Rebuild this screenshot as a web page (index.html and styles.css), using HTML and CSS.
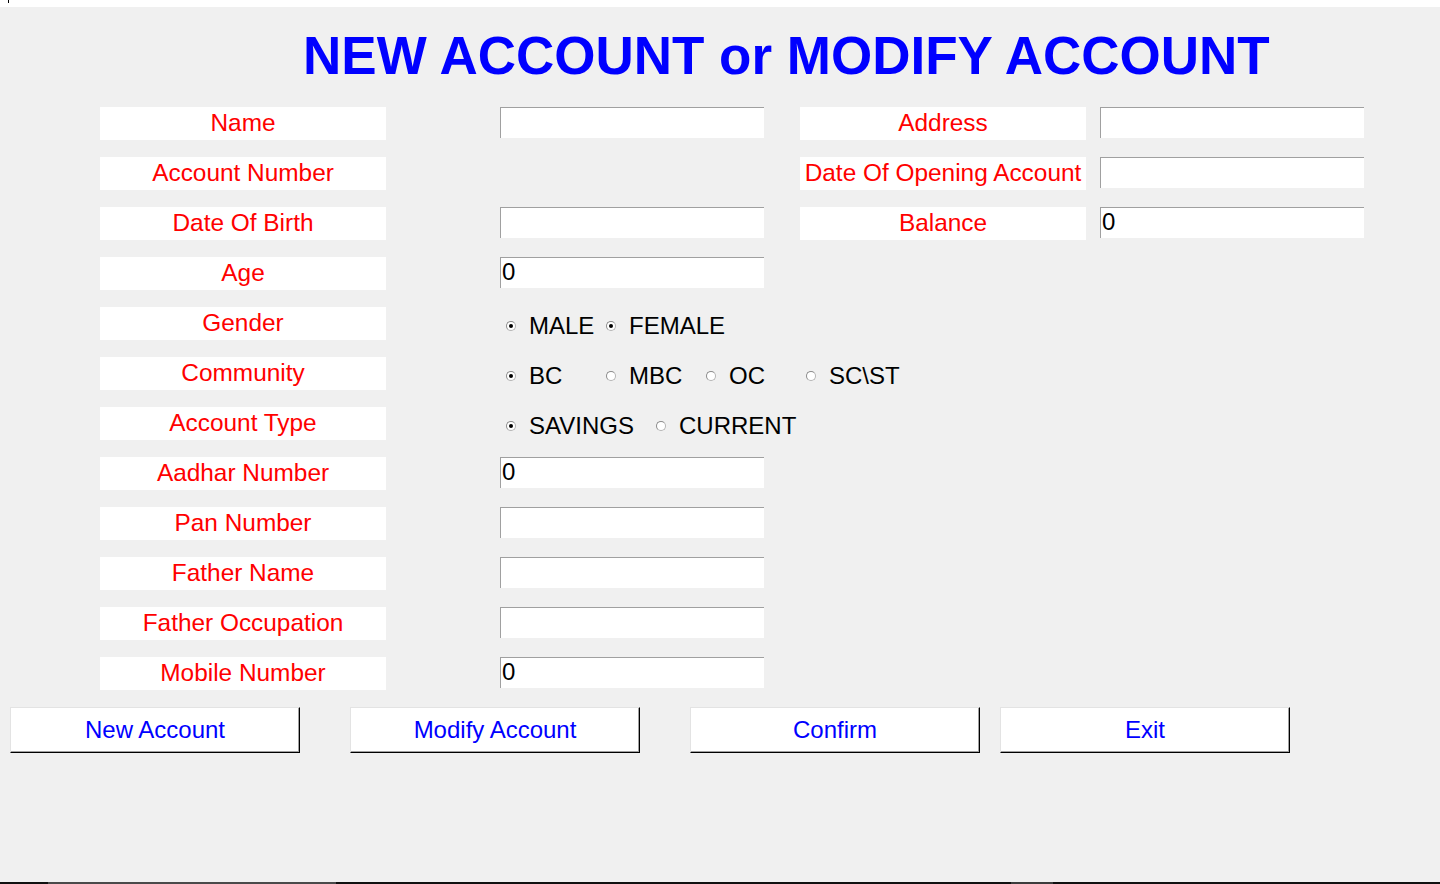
FILE: index.html
```html
<!DOCTYPE html>
<html>
<head>
<meta charset="utf-8">
<title>NEW ACCOUNT or MODIFY ACCOUNT</title>
<link rel="stylesheet" href="styles.css">
</head>
<body>
<div class="page">
  <div class="topbar"><span class="tick"></span></div>
  <h1 class="title">NEW ACCOUNT or MODIFY ACCOUNT</h1>
  <div class="form">
    <div class="row">
      <div class="label">Name</div>
      <input class="field" type="text" value="">
      <div class="label label-right">Address</div>
      <input class="field field-right" type="text" value="">
    </div>
    <div class="row">
      <div class="label">Account Number</div>
      <div class="blank"></div>
      <div class="label label-right">Date Of Opening Account</div>
      <input class="field field-right" type="text" value="">
    </div>
    <div class="row">
      <div class="label">Date Of Birth</div>
      <input class="field" type="text" value="">
      <div class="label label-right">Balance</div>
      <input class="field field-right" type="text" value="0">
    </div>
    <div class="row">
      <div class="label">Age</div>
      <input class="field" type="text" value="0">
    </div>
    <div class="row">
      <div class="label">Gender</div>
      <div class="options">
        <div class="opt w100"><span class="radio checked"></span>MALE</div>
        <div class="opt w100"><span class="radio checked"></span>FEMALE</div>
      </div>
    </div>
    <div class="row">
      <div class="label">Community</div>
      <div class="options">
        <div class="opt w100"><span class="radio checked"></span>BC</div>
        <div class="opt w100"><span class="radio"></span>MBC</div>
        <div class="opt w100"><span class="radio"></span>OC</div>
        <div class="opt w100"><span class="radio"></span>SC\ST</div>
      </div>
    </div>
    <div class="row">
      <div class="label">Account Type</div>
      <div class="options">
        <div class="opt w150"><span class="radio checked"></span>SAVINGS</div>
        <div class="opt w150"><span class="radio"></span>CURRENT</div>
      </div>
    </div>
    <div class="row">
      <div class="label">Aadhar Number</div>
      <input class="field" type="text" value="0">
    </div>
    <div class="row">
      <div class="label">Pan Number</div>
      <input class="field" type="text" value="">
    </div>
    <div class="row">
      <div class="label">Father Name</div>
      <input class="field" type="text" value="">
    </div>
    <div class="row">
      <div class="label">Father Occupation</div>
      <input class="field" type="text" value="">
    </div>
    <div class="row">
      <div class="label">Mobile Number</div>
      <input class="field" type="text" value="0">
    </div>
    <div class="buttons">
      <button class="btn gap50">New Account</button>
      <button class="btn gap50">Modify Account</button>
      <button class="btn gap20">Confirm</button>
      <button class="btn">Exit</button>
    </div>
  </div>
  <div class="spacer"></div>
  <div class="bottombar"></div>
</div>
</body>
</html>
```

FILE: styles.css
```css
* {
  box-sizing: border-box;
}

html, body {
  margin: 0;
  padding: 0;
  background: #f0f0f0;
}

body {
  font-family: "Liberation Sans", Arial, sans-serif;
}

.page {
  height: 884px;
  display: flex;
  flex-direction: column;
  overflow: hidden;
}

.topbar {
  height: 7px;
  background: #ffffff;
  flex: none;
}

.tick {
  display: block;
  margin-left: 8px;
  width: 1px;
  height: 3px;
  background: #000000;
}

.title {
  margin: 22px 0 0 0;
  padding-left: 303px;
  font-size: 53px;
  line-height: 53px;
  font-weight: bold;
  color: #0000ff;
  white-space: nowrap;
}

.form {
  margin-top: 25px;
  display: flex;
  flex-direction: column;
  gap: 17px;
}

.row {
  display: flex;
  height: 33px;
  padding-left: 100px;
}

.label {
  width: 286px;
  height: 33px;
  background: #ffffff;
  color: #ff0000;
  font-size: 24.4px;
  line-height: 31px;
  text-align: center;
  white-space: nowrap;
  flex: none;
}

.label-right {
  margin-left: 36px;
}

.field,
.blank {
  width: 264px;
  height: 31px;
  margin-left: 114px;
  flex: none;
}

.field {
  border: none;
  border-top: 1px solid #a0a0a0;
  border-left: 1px solid #a0a0a0;
  background: #ffffff;
  font-family: "Liberation Sans", Arial, sans-serif;
  font-size: 24px;
  color: #000000;
  padding: 0 0 2px 1px;
  outline: none;
}

.field-right {
  margin-left: 14px;
}

.options {
  display: flex;
  margin-left: 114px;
}

.opt {
  display: flex;
  align-items: flex-start;
  height: 33px;
  padding-top: 1px;
  font-size: 24px;
  line-height: 35px;
  color: #000000;
  white-space: nowrap;
}

.w100 {
  width: 100px;
}

.w150 {
  width: 150px;
}

.radio {
  width: 10px;
  height: 10px;
  margin: 13px 13px 0 6px;
  border-radius: 50%;
  background: #ffffff;
  border: 1px solid #b4b4b4;
  border-top-color: #8a8a8a;
  border-left-color: #8a8a8a;
  display: flex;
  align-items: center;
  justify-content: center;
  flex: none;
}

.radio.checked::after {
  content: "";
  width: 4px;
  height: 4px;
  border-radius: 50%;
  background: #000000;
}

.buttons {
  display: flex;
  padding-left: 10px;
}

.btn {
  width: 290px;
  height: 46px;
  background: #ffffff;
  border: 1px solid #000000;
  border-top-color: #e3e3e3;
  border-left-color: #e3e3e3;
  box-shadow: inset -1px -1px 0 #a0a0a0;
  color: #0000ff;
  font-family: "Liberation Sans", Arial, sans-serif;
  font-size: 24px;
  padding: 0;
  flex: none;
}

.gap50 {
  margin-right: 50px;
}

.gap20 {
  margin-right: 20px;
}

.spacer {
  flex: 1;
}

.bottombar {
  height: 2px;
  flex: none;
  background: linear-gradient(to right,
    #101010 0, #101010 48px,
    #4a4a4a 48px, #4a4a4a 336px,
    #101010 336px, #101010 1011px,
    #3c3c3c 1011px, #3c3c3c 1053px,
    #101010 1053px, #101010 100%);
}
```
